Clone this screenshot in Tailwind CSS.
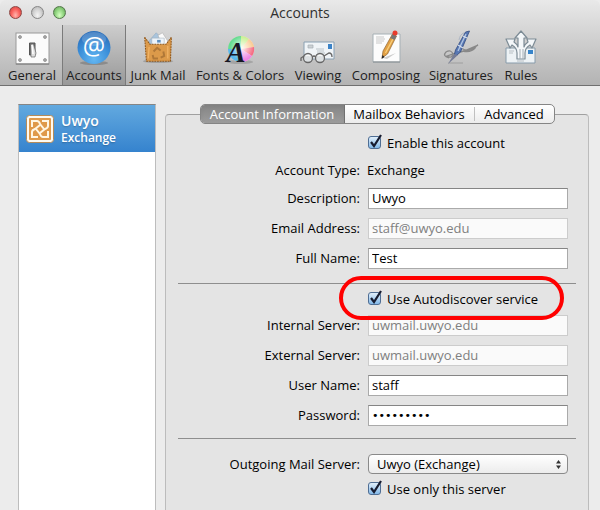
<!DOCTYPE html>
<html lang="en">
<head>
  <meta charset="UTF-8" />
  <meta name="viewport" content="width=device-width, initial-scale=1.0" />
  <title>Accounts</title>
  <script src="https://cdn.jsdelivr.net/npm/@tailwindcss/browser@4"></script>
</head>
<body class="bg-[#ececec] text-black font-['Open_Sans',sans-serif] text-[13px] leading-5">
  <div class="h-screen flex flex-col overflow-hidden">

    <!-- Title bar and toolbar -->
    <header class="shrink-0 rounded-t-md bg-linear-to-b from-[#e9e9e9] to-[#b3b3b3] border-b border-[#707070]">
      <div class="grid grid-cols-[80px_1fr_80px] items-center h-[25px]">
        <div class="flex gap-[9px] pl-[9px]">
          <button type="button" aria-label="Close" class="size-[13px] rounded-full border border-[#8e4643] bg-radial-[at_50%_75%] from-[#ffb5ae] via-[#fb6560] to-[#c63b38]"></button>
          <button type="button" aria-label="Minimize" class="size-[13px] rounded-full border border-[#868686] bg-radial-[at_50%_75%] from-[#f4f4f4] via-[#d4d4d4] to-[#a8a8a8]"></button>
          <button type="button" aria-label="Zoom" class="size-[13px] rounded-full border border-[#53774a] bg-radial-[at_50%_75%] from-[#d5ffc2] via-[#93d782] to-[#5b9c50]"></button>
        </div>
        <h1 class="text-center text-sm font-medium text-[#303030]">Accounts</h1>
      </div>

      <nav class="grid grid-cols-[60px_64px_64px_100px_56px_80px_70px_50px] h-[60px] pl-0.5 text-[13px] text-[#202020]">
        <button type="button" class="flex flex-col items-center pt-1">
          <svg class="w-9 h-9 shrink-0" viewBox="0 0 36 36">
            <rect x="2" y="4" width="33" height="31" fill="#fbfbfb" stroke="#999" />
            <path d="M2 35h33" stroke="#777" />
            <g fill="#aaa" stroke="#777" stroke-width=".6"><circle cx="6" cy="8" r="1.5" /><circle cx="31" cy="8" r="1.5" /><circle cx="6" cy="31" r="1.5" /><circle cx="31" cy="31" r="1.5" /></g>
            <path d="M15.500 14h5.500v12h-5.500z" fill="#777" stroke="#555" />
            <path d="M17 15h2.500l2.500 9-1 4h-4z" fill="#ddd" stroke="#666" stroke-width=".7" />
            <path d="M18 16l1 9" stroke="#fff" stroke-width="1.500" />
          </svg>
          General
        </button>
        <button type="button" aria-current="page" class="flex flex-col items-center pt-1 border-x border-[#7b7b7b] bg-linear-to-b from-[#cdcdcd] to-[#999999]">
          <svg class="w-9 h-9 shrink-0" viewBox="0 0 36 36">
            <defs><radialGradient id="at" cx=".5" cy=".85" r=".8"><stop offset="0" stop-color="#64b7f2" /><stop offset=".6" stop-color="#3b8ed8" /><stop offset="1" stop-color="#2b6fbb" /></radialGradient></defs>
            <ellipse cx="18" cy="34" rx="14" ry="2" fill="#777" opacity=".6" />
            <circle cx="18" cy="18.500" r="16.500" fill="url(#at)" />
            <ellipse cx="18" cy="10" rx="12" ry="7" fill="#fff" opacity=".18" />
            <text x="18" y="26" text-anchor="middle" font-family="Open Sans" font-size="25" font-weight="500" fill="#fff">@</text>
          </svg>
          Accounts
        </button>
        <button type="button" class="flex flex-col items-center pt-1">
          <svg class="w-8 h-9 shrink-0" viewBox="0 0 36 36">
            <ellipse cx="18" cy="34" rx="17" ry="2" fill="#888" opacity=".6" />
            <path d="M8 11l8-9 7 7-2 9H9z" fill="#a9c4dc" stroke="#8aa7bf" stroke-width=".6" />
            <path d="M18 5l5-3 7 11-6 5z" fill="#fafafa" stroke="#aaa" stroke-width=".6" />
            <path d="M11 8h14v9H11z" fill="#edf4fa" stroke="#9eacb8" stroke-width=".6" />
            <path d="M17 10h4v3h-4z" fill="#5d8ebc" />
            <path d="M3 7l6 8h18l6-8v8l-1 19H5z" fill="#dc9a4a" />
            <path d="M3 7l6 8h18l6-8M3 7l2 27h27l1-27" fill="none" stroke="#8e571d" stroke-width="1.200" stroke-dasharray="2 1" />
            <path d="M8 18l-1 13M29 17v14" stroke="#f0b264" stroke-width="1.500" />
            <g fill="none" stroke="#b07838" stroke-width="2.200"><path d="M13 23l4-4 4 3" /><path d="M24 23l1 5-4 2" /><path d="M18 31h-5l-1-4" /></g>
          </svg>
          Junk Mail
        </button>
        <button type="button" class="flex flex-col items-center pt-1">
          <svg class="w-9 h-9 shrink-0 overflow-visible" viewBox="0 0 36 36">
            <defs><radialGradient id="wheel"><stop offset="0" stop-color="#fff" stop-opacity=".9" /><stop offset="1" stop-color="#fff" stop-opacity="0" /></radialGradient></defs>
            <ellipse cx="18" cy="33" rx="13" ry="2" fill="#888" opacity=".5" />
            <circle cx="19" cy="20" r="13" fill="#f4d5ce" />
            <path d="M19 20V7A13 13 0 0 0 6 20z" fill="#66dc91" />
            <path d="M19 20V7a13 13 0 0 1 8 3z" fill="#c6f08e" />
            <path d="M19 20l8-10a13 13 0 0 1 5 8z" fill="#f9c98e" />
            <path d="M19 20l13-2a13 13 0 0 1-2 9z" fill="#f56a80" />
            <path d="M19 20l11 7a13 13 0 0 1-11 6z" fill="#ee86e4" />
            <path d="M19 20v13A13 13 0 0 1 6 20z" fill="#58b8ec" />
            <circle cx="20" cy="19" r="12" fill="url(#wheel)" />
            <text x="14" y="33" text-anchor="middle" font-family="Liberation Serif" font-size="29" font-weight="700" font-style="italic" fill="#171724">A</text>
          </svg>
          Fonts &amp; Colors
        </button>
        <button type="button" class="flex flex-col items-center pt-1">
          <svg class="w-9 h-9 shrink-0" viewBox="0 0 36 36">
            <path d="M4 13h30v17H4z" fill="#f0f4f7" stroke="#8aa0b2" />
            <path d="M28 15h4v5h-4z" fill="#3c83c7" />
            <path d="M8 16h5v3H8zM16 20h8M17 22h7M17 24h8" fill="#ccd1d4" stroke="#a4acb1" stroke-width=".7" />
            <g fill="#dce0e2" stroke="#666" stroke-width="1.300"><circle cx="8" cy="29" r="4.500" /><circle cx="20" cy="29" r="4.500" /></g>
            <path d="M12.500 28q1.500-2 3 0M24 27l5-3q3 0 3 4M4 27l-3 2v3" fill="none" stroke="#666" stroke-width="1.300" />
            <path d="M6 27q2-2 4 0M18 27q2-2 4 0" fill="none" stroke="#fff" />
          </svg>
          Viewing
        </button>
        <button type="button" class="flex flex-col items-center pt-1">
          <svg class="w-9 h-9 shrink-0" viewBox="0 0 36 36">
            <path d="M5 5h27v28H5z" fill="#fcfcfc" stroke="#a6b0b5" />
            <path d="M5 33h27" stroke="#858b8f" />
            <path d="M8 8h8M8 10h9M8 12h8M8 14h6" stroke="#bbb" stroke-width=".8" />
            <path d="M15 29l13-5-9 6z" fill="#ccc" />
            <path d="M24.500 5l4 2-9 18-5.500 4 1-7z" fill="#e2a044" stroke="#8e6534" stroke-width=".7" />
            <path d="M26 8l-8.500 16" stroke="#f8cf7b" stroke-width="1.300" />
            <path d="M24.500 5l4 2-2 4-4-2z" fill="#777" />
            <path d="M14.500 26l-1 4 3-2z" fill="#222" />
            <circle cx="27" cy="4" r="2.500" fill="#e83b2b" />
          </svg>
          Composing
        </button>
        <button type="button" class="flex flex-col items-center pt-1">
          <svg class="w-9 h-9 shrink-0" viewBox="0 0 36 36">
            <path d="M6 29q-7-2-3-6 5-3 7 2-1 5-6 2 9-3 17-5l14-6q-8 6-13 5l-4-2M20 22q8 2 13-4" fill="none" stroke="#888" stroke-width="1.300" />
            <path d="M5 34h15" stroke="#aaa" stroke-width="1.500" />
            <path d="M22.500 3l4-1-9 21-7 6 2-8z" fill="#5878b4" stroke="#344d80" stroke-width=".8" />
            <path d="M23 5l-8 17" stroke="#b3c7e3" stroke-width="1.300" />
            <path d="M11 25l4 1-10 9z" fill="#757c96" />
            <path d="M15 16l5 3M20 7l4 2" stroke="#d8dfec" stroke-width="1.200" />
            <path d="M21 4q-4 1-5 7" fill="none" stroke="#aeb7c5" />
          </svg>
          Signatures
        </button>
        <button type="button" class="flex flex-col items-center pt-1">
          <svg class="w-9 h-9 shrink-0" viewBox="0 0 36 36">
            <path d="M3 19h29v15H3z" fill="#edf2f5" stroke="#879baa" />
            <path d="M25 21h5v4h-5z" fill="#3684ca" />
            <path d="M6 22h5M6 24h4M14 32h7" stroke="#b8bfc4" />
            <path d="M14 30V24Q14 19 9 16l-2 3-4-9 9 0-1 3q3 2 4 5V9h-3l6-7 6 7h-3v9q1-3 4-5l-1-3h9l-4 9-2-3q-5 3-5 8v6z" fill="#f4f7f9" stroke="#7c8b95" stroke-width="1.200" stroke-linejoin="round" />
            <path d="M17 20v10M20 20v10" stroke="#a3adb4" />
          </svg>
          Rules
        </button>
      </nav>
    </header>

    <main class="flex-1 flex gap-[9px] pl-[18px] pr-[11px] pt-[18px] min-h-0">
      <!-- Account list -->
      <aside class="w-[138px] shrink-0 bg-white border-x border-t border-[#bdbdbd] border-t-[#858585]">
        <a href="#uwyo" class="flex items-center gap-[7px] h-[47px] pl-[7px] bg-linear-to-b from-[#62a9df] to-[#3583ce] text-white text-shadow-sm">
          <svg class="size-7 shrink-0" viewBox="0 0 28 28">
            <rect x=".5" y=".5" width="27" height="27" rx="3" fill="#fffaf0" stroke="#b48b59" />
            <rect x="3" y="3" width="22" height="22" rx="1" fill="#df994a" />
            <g fill="none" stroke="#fff6e4" stroke-width="2">
              <path d="M6 12V6h5q2 0 3 3l4 5" />
              <path d="M16 6h6v5q0 2-3 3l-5 4" />
              <path d="M22 16v6h-5q-2 0-3-3l-4-5" />
              <path d="M12 22H6v-5q0-2 3-3l5-4" />
            </g>
          </svg>
          <span class="flex flex-col">
            <span class="text-sm leading-[17px] font-semibold">Uwyo</span>
            <span class="text-xs leading-[17px] font-semibold">Exchange</span>
          </span>
        </a>
      </aside>

      <!-- Account settings -->
      <section class="flex-1 flex flex-col min-w-0">
        <div class="relative z-10 flex justify-center">
          <div role="tablist" class="flex h-5 rounded-[5px] border border-[#858585] overflow-hidden bg-linear-to-b from-white to-[#ececec] leading-[18px]">
            <button type="button" role="tab" aria-selected="true" class="w-36 bg-linear-to-b from-[#858585] to-[#9c9c9c] border-r border-[#707070] text-white inset-shadow-sm">Account Information</button>
            <button type="button" role="tab" class="w-[129px] font-medium">Mailbox Behaviors</button>
            <span class="w-px my-0.5 bg-[#c0c0c0]"></span>
            <button type="button" role="tab" class="w-[79px] font-medium">Advanced</button>
          </div>
        </div>

        <form class="flex-1 -mt-2.5 pt-[17px] px-3 rounded-t-[4px] border-x border-t border-[#bcbcbc] border-t-[#a0a0a0] bg-[#e4e4e4]">
          <div class="grid grid-cols-[182px_1fr] gap-x-2 pr-2">
            <label class="col-start-2 flex items-center gap-1.5 h-[21px]">
              <span class="grid size-[13px]">
                <input type="checkbox" checked class="col-start-1 row-start-1 appearance-none size-[13px] rounded-[3px] border border-[#4f6e94] bg-linear-to-b from-[#e0effb] to-[#83b9e9]" />
                <svg class="col-start-1 row-start-1 size-[13px] overflow-visible pointer-events-none" viewBox="0 0 13 13"><path d="M3 6l3 4 7-11" fill="none" stroke="#171c30" stroke-width="2.200" /></svg>
              </span>
              Enable this account
            </label>
          </div>

          <div class="grid grid-cols-[182px_1fr] gap-x-2 pr-2 pt-[7px] pb-2">
            <span class="text-right">Account Type:</span>
            <span class="-ml-px">Exchange</span>
          </div>

          <div class="grid grid-cols-[182px_1fr] gap-x-2 gap-y-[9px] pr-2 text-right leading-[21px]">
            <label for="description">Description:</label>
            <input id="description" type="text" value="Uwyo" class="min-w-0 h-[21px] px-[3px] bg-white border border-[#aaaaaa] border-t-[#858585] text-left" />
            <label for="email">Email Address:</label>
            <input id="email" type="text" value="staff@uwyo.edu" disabled class="min-w-0 h-[21px] px-[3px] bg-[#fafafa] border border-[#cccccc] text-[#808080] text-left" />
            <label for="fullname">Full Name:</label>
            <input id="fullname" type="text" value="Test" class="min-w-0 h-[21px] px-[3px] bg-white border border-[#aaaaaa] border-t-[#858585] text-left" />
          </div>

          <hr class="mt-3.5 border-[#8e8e8e]" />

          <div class="grid grid-cols-[182px_1fr] gap-x-2 pr-2 pt-1 pb-1.5">
            <div class="col-start-2 relative">
              <label class="flex items-center gap-1.5 h-[21px]">
                <span class="grid size-[13px]">
                  <input type="checkbox" checked class="col-start-1 row-start-1 appearance-none size-[13px] rounded-[3px] border border-[#4f6e94] bg-linear-to-b from-[#e0effb] to-[#83b9e9]" />
                  <svg class="col-start-1 row-start-1 size-[13px] overflow-visible pointer-events-none" viewBox="0 0 13 13"><path d="M3 6l3 4 7-11" fill="none" stroke="#171c30" stroke-width="2.200" /></svg>
                </span>
                Use Autodiscover service
              </label>
              <div class="absolute z-10 -left-[29px] right-1 -top-3 h-11 rounded-full border-4 border-[#ff0000] pointer-events-none"></div>
            </div>
          </div>

          <div class="grid grid-cols-[182px_1fr] gap-x-2 gap-y-[9px] pr-2 text-right leading-[21px]">
            <label for="internal">Internal Server:</label>
            <input id="internal" type="text" value="uwmail.uwyo.edu" disabled class="min-w-0 h-[21px] px-[3px] bg-[#fafafa] border border-[#cccccc] text-[#808080] text-left" />
            <label for="external">External Server:</label>
            <input id="external" type="text" value="uwmail.uwyo.edu" disabled class="min-w-0 h-[21px] px-[3px] bg-[#fafafa] border border-[#cccccc] text-[#808080] text-left" />
            <label for="username">User Name:</label>
            <input id="username" type="text" value="staff" class="min-w-0 h-[21px] px-[3px] bg-white border border-[#aaaaaa] border-t-[#858585] text-left" />
            <label for="password">Password:</label>
            <input id="password" type="password" value="password1" class="min-w-0 h-[21px] px-[3px] bg-white border border-[#aaaaaa] border-t-[#858585] text-left font-['DejaVu_Sans',sans-serif] text-[11px]" />
          </div>

          <hr class="mt-3 border-[#8e8e8e]" />

          <div class="grid grid-cols-[182px_1fr] gap-x-2 gap-y-1 pr-2 pt-[15px] text-right">
            <label for="outgoing">Outgoing Mail Server:</label>
            <div class="grid items-center">
              <select id="outgoing" class="col-start-1 row-start-1 appearance-none min-w-0 h-5 pl-2 rounded-[4px] border border-[#8a8a8a] bg-linear-to-b from-white to-[#ececec] leading-[18px]">
                <option>Uwyo (Exchange)</option>
              </select>
              <svg class="col-start-1 row-start-1 justify-self-end mr-[7px] w-[5px] h-[9px] pointer-events-none" viewBox="0 0 5 9"><path d="M0 3.500L2.500 0 5 3.500zM0 5.500L2.500 9 5 5.500z" fill="#333" /></svg>
            </div>
            <label class="col-start-2 flex items-center gap-1.5 h-[21px]">
              <span class="grid size-[13px]">
                <input type="checkbox" checked class="col-start-1 row-start-1 appearance-none size-[13px] rounded-[3px] border border-[#4f6e94] bg-linear-to-b from-[#e0effb] to-[#83b9e9]" />
                <svg class="col-start-1 row-start-1 size-[13px] overflow-visible pointer-events-none" viewBox="0 0 13 13"><path d="M3 6l3 4 7-11" fill="none" stroke="#171c30" stroke-width="2.200" /></svg>
              </span>
              Use only this server
            </label>
          </div>
        </form>
      </section>
    </main>
  </div>
</body>
</html>
